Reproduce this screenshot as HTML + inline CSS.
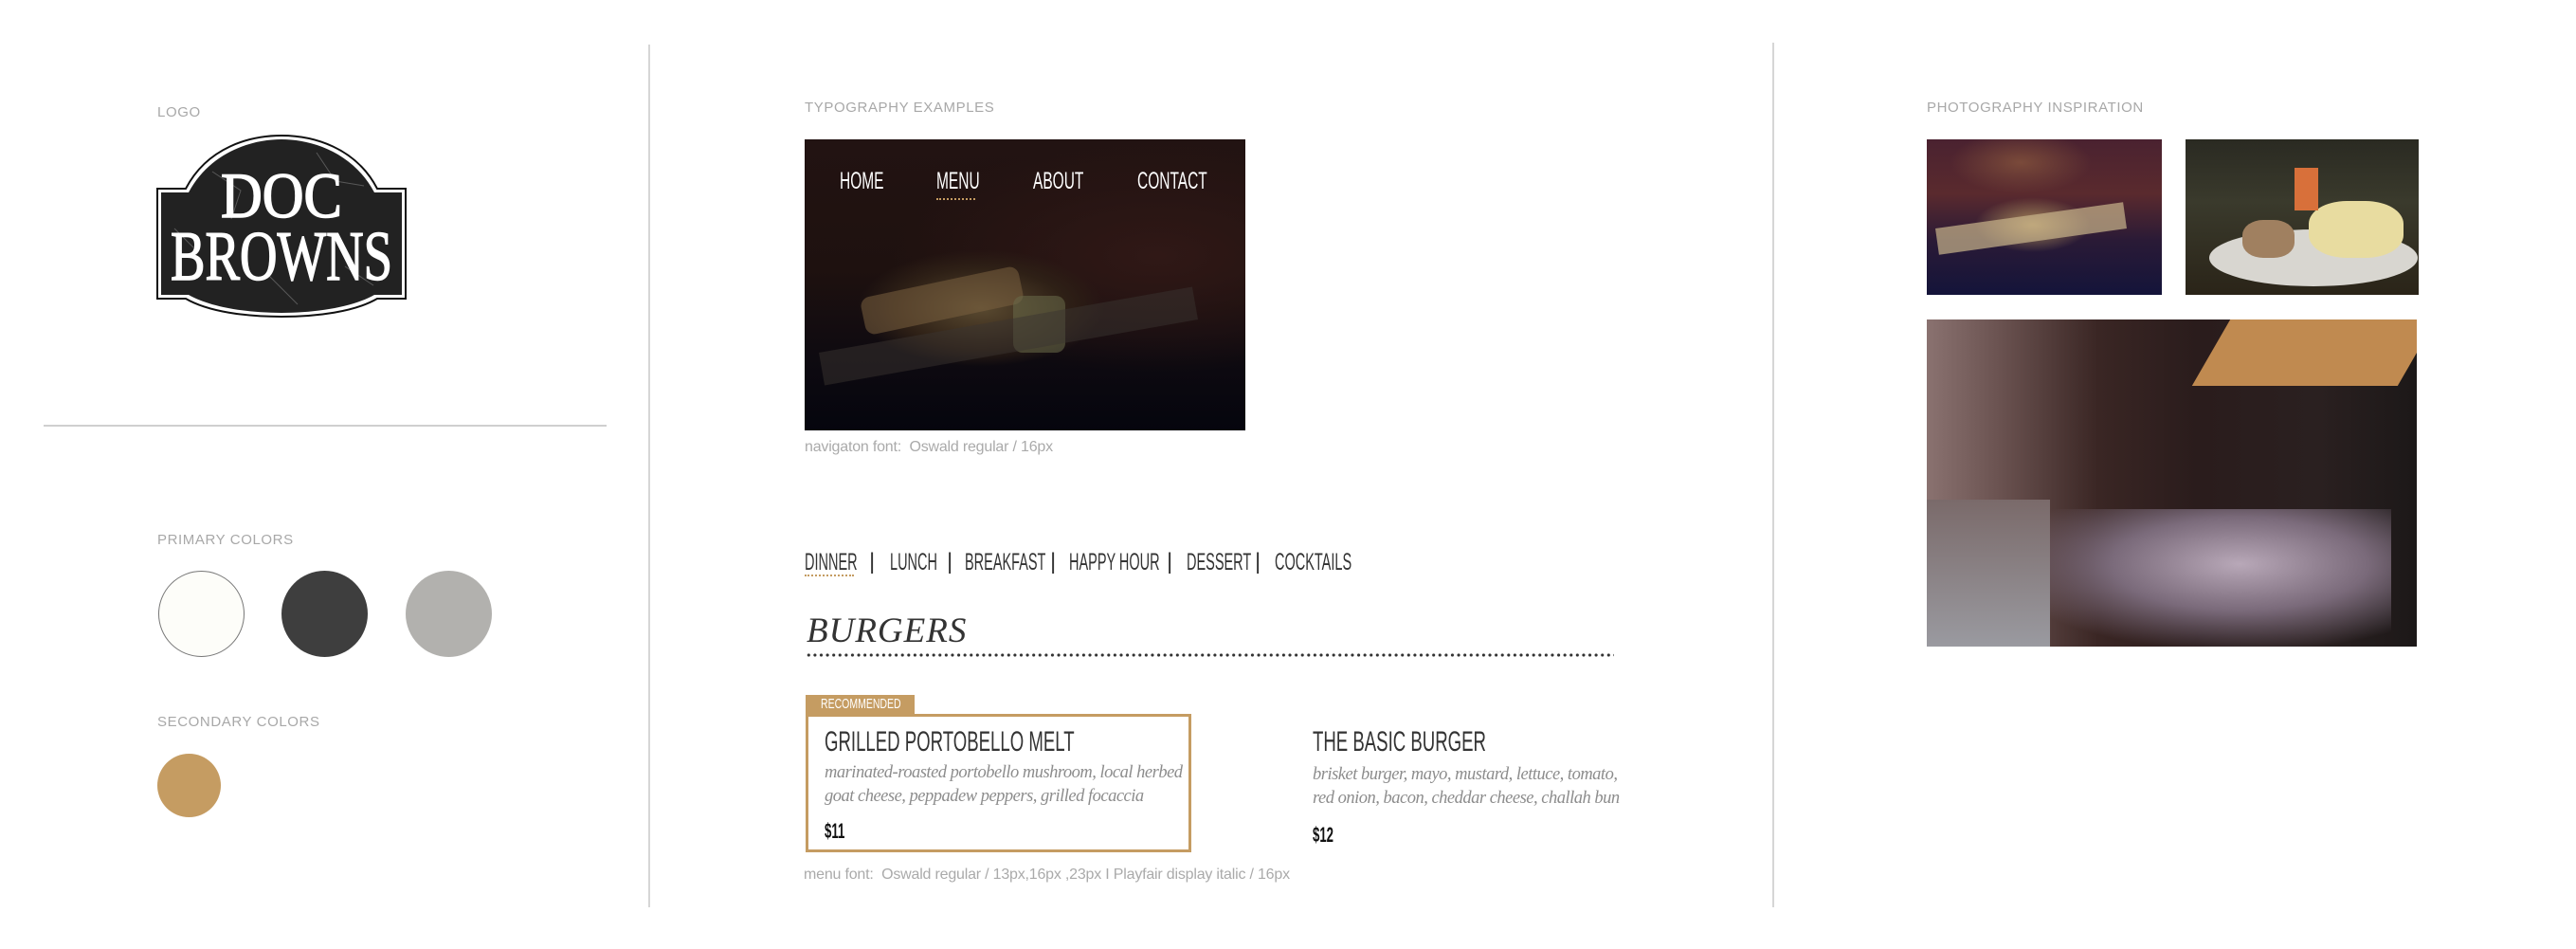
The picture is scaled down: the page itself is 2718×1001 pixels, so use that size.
<!DOCTYPE html>
<html><head><meta charset="utf-8"><style>
*{margin:0;padding:0;box-sizing:border-box}
body{width:2718px;height:1001px;background:#fff;position:relative;overflow:hidden;font-family:"Liberation Sans",sans-serif}
.a{position:absolute;white-space:nowrap}
.lbl{font-size:15px;color:#a8a8a8;letter-spacing:0.6px}
.cap{font-size:16px;color:#aaa;letter-spacing:-0.2px}
.o{display:inline-block;transform-origin:left center;transform:scaleX(.65);font-family:"Liberation Sans",sans-serif}
.vl{position:absolute;width:2px;background:#d6d6d6}
.circ{position:absolute;border-radius:50%}
.pf{font-family:"Liberation Serif",serif;font-style:italic;color:#8c8c8c;font-size:18.5px}
</style></head><body>
<div class="vl" style="left:684px;top:47px;height:910px"></div>
<div class="vl" style="left:1870px;top:45px;height:912px"></div>

<div class="a lbl" style="left:166px;top:110px">LOGO</div>
<svg class="a" style="left:164px;top:141px" width="266" height="195" viewBox="0 0 266 195">
<path d="M2,58 L32,58 C55,14 100,2 133,2 C166,2 211,14 234,58 L264,58 L264,174 L234,174 C210,188 170,193 133,193 C96,193 56,188 32,174 L2,174 Z" fill="#fff" stroke="#111" stroke-width="2"/>
<path d="M6,62 L35,62 C58,19 102,6 133,6 C164,6 208,19 231,62 L260,62 L260,170 L231,170 C208,183 170,189 133,189 C96,189 58,183 35,170 L6,170 Z" fill="#222"/>
<g stroke="#666" stroke-width="1" fill="none" opacity=".8"><path d="M60,40 L90,60 L80,90"/><path d="M170,20 L190,50 L220,55"/><path d="M120,150 L150,180"/><path d="M200,140 L230,160"/><path d="M20,100 L40,120"/></g>
<text x="133" y="88" text-anchor="middle" font-family="Liberation Serif,serif" font-size="68" fill="#fff" stroke="#fff" stroke-width="1.5" textLength="128" lengthAdjust="spacingAndGlyphs">DOC</text>
<text x="133" y="154" text-anchor="middle" font-family="Liberation Serif,serif" font-size="74" fill="#fff" stroke="#fff" stroke-width="1.5" textLength="234" lengthAdjust="spacingAndGlyphs">BROWNS</text>
</svg>
<div class="a" style="left:46px;top:448px;width:594px;height:2px;background:#cfcfcf"></div>

<div class="a lbl" style="left:166px;top:561px">PRIMARY COLORS</div>
<div class="circ" style="left:167px;top:602px;width:91px;height:91px;background:#fdfdf9;border:1.5px solid #777"></div>
<div class="circ" style="left:297px;top:602px;width:91px;height:91px;background:#3e3e3e"></div>
<div class="circ" style="left:428px;top:602px;width:91px;height:91px;background:#b2b1ae"></div>
<div class="a lbl" style="left:166px;top:753px">SECONDARY COLORS</div>
<div class="circ" style="left:166px;top:795px;width:67px;height:67px;background:#c59c62"></div>

<div class="a lbl" style="left:849px;top:105px">TYPOGRAPHY EXAMPLES</div>
<div class="a" style="left:849px;top:147px;width:465px;height:307px;overflow:hidden;background:radial-gradient(ellipse 35% 25% at 40% 58%,#5a4a30 0%,#2e2016 55%,transparent 80%),radial-gradient(ellipse 60% 40% at 80% 40%,#301816,transparent),linear-gradient(180deg,#221312 0%,#1e110f 45%,#0e0a10 75%,#05050e 100%)">
 <div class="a" style="left:60px;top:150px;width:170px;height:40px;background:#7a6040;opacity:.55;border-radius:10px;transform:rotate(-12deg)"></div>
 <div class="a" style="left:220px;top:165px;width:55px;height:60px;background:#6a6b4a;opacity:.55;border-radius:10px"></div>
 <div class="a" style="left:15px;top:190px;width:400px;height:35px;background:#3a3330;opacity:.5;transform:rotate(-10deg)"></div>
 <div class="a" style="left:37px;top:30px;color:#fff;font-size:25px"><span class="o" style="transform:scaleX(.62)">HOME</span></div>
 <div class="a" style="left:139px;top:30px;color:#fff;font-size:25px"><span class="o" style="transform:scaleX(.62)">MENU</span></div>
 <div class="a" style="left:139px;top:62px;width:41px;border-top:2px dotted #c59c62"></div>
 <div class="a" style="left:241px;top:30px;color:#fff;font-size:25px"><span class="o" style="transform:scaleX(.62)">ABOUT</span></div>
 <div class="a" style="left:351px;top:30px;color:#fff;font-size:25px"><span class="o" style="transform:scaleX(.62)">CONTACT</span></div>
</div>
<div class="a cap" style="left:849px;top:463px">navigaton font:&nbsp; Oswald regular / 16px</div>

<div class="a" style="left:849px;top:579px;font-size:25px;color:#333"><span class="o" style="transform:scaleX(.58)">DINNER</span></div>
<div class="a" style="left:849px;top:606px;width:52px;border-top:2px dotted #c59c62"></div>
<div class="a" style="left:917px;top:579px;font-size:24px;color:#333">|</div>
<div class="a" style="left:939px;top:579px;font-size:25px;color:#333"><span class="o" style="transform:scaleX(.58)">LUNCH</span></div>
<div class="a" style="left:999px;top:579px;font-size:24px;color:#333">|</div>
<div class="a" style="left:1018px;top:579px;font-size:25px;color:#333"><span class="o" style="transform:scaleX(.58)">BREAKFAST</span></div>
<div class="a" style="left:1108px;top:579px;font-size:24px;color:#333">|</div>
<div class="a" style="left:1128px;top:579px;font-size:25px;color:#333"><span class="o" style="transform:scaleX(.58)">HAPPY HOUR</span></div>
<div class="a" style="left:1231px;top:579px;font-size:24px;color:#333">|</div>
<div class="a" style="left:1252px;top:579px;font-size:25px;color:#333"><span class="o" style="transform:scaleX(.58)">DESSERT</span></div>
<div class="a" style="left:1324px;top:579px;font-size:24px;color:#333">|</div>
<div class="a" style="left:1345px;top:579px;font-size:25px;color:#333"><span class="o" style="transform:scaleX(.58)">COCKTAILS</span></div>

<div class="a" style="left:851px;top:644px;font-family:'Liberation Serif',serif;font-style:italic;font-size:37px;color:#333;letter-spacing:1px">BURGERS</div>
<div class="a" style="left:850px;top:689px;width:853px;height:4px;background:radial-gradient(circle,#333 1.4px,transparent 1.8px) 0 0/6.6px 4px repeat-x"></div>

<div class="a" style="left:850px;top:733px;width:115px;height:22px;background:#c59c62;color:#fff;font-size:15px;padding:1px 0 0 16px"><span class="o" style="transform:scaleX(.7)">RECOMMENDED</span></div>
<div class="a" style="left:850px;top:753px;width:407px;height:146px;border:3px solid #c59c62"></div>
<div class="a" style="left:870px;top:766px;font-size:30px;color:#333"><span class="o" style="transform:scaleX(.62)">GRILLED PORTOBELLO MELT</span></div>
<div class="a pf" style="left:870px;top:805px;letter-spacing:-0.5px">marinated-roasted portobello mushroom, local herbed</div>
<div class="a pf" style="left:870px;top:830px;letter-spacing:-0.5px">goat cheese, peppadew peppers, grilled focaccia</div>
<div class="a" style="left:870px;top:864px;font-size:22px;color:#111;font-weight:bold"><span class="o" style="transform:scaleX(.6)">$11</span></div>

<div class="a" style="left:1385px;top:766px;font-size:30px;color:#333"><span class="o" style="transform:scaleX(.62)">THE BASIC BURGER</span></div>
<div class="a pf" style="left:1385px;top:807px;letter-spacing:-0.5px">brisket burger, mayo, mustard, lettuce, tomato,</div>
<div class="a pf" style="left:1385px;top:832px;letter-spacing:-0.5px">red onion, bacon, cheddar cheese, challah bun</div>
<div class="a" style="left:1385px;top:868px;font-size:22px;color:#111;font-weight:bold"><span class="o" style="transform:scaleX(.6)">$12</span></div>
<div class="a cap" style="left:848px;top:914px">menu font:&nbsp; Oswald regular / 13px,16px ,23px I Playfair display italic / 16px</div>

<div class="a lbl" style="left:2033px;top:105px">PHOTOGRAPHY INSPIRATION</div>
<div class="a" style="left:2033px;top:147px;width:248px;height:164px;overflow:hidden;background:radial-gradient(ellipse 35% 25% at 45% 55%,#a98a5a,transparent 70%),radial-gradient(ellipse 30% 20% at 40% 15%,#7a4a3a,transparent),linear-gradient(180deg,#4a2230 0%,#5a2a2e 35%,#2a1a36 65%,#14143a 100%)">
 <div class="a" style="left:10px;top:80px;width:200px;height:28px;background:#c9b58c;opacity:.7;transform:rotate(-8deg)"></div>
</div>
<div class="a" style="left:2306px;top:147px;width:246px;height:164px;overflow:hidden;background:linear-gradient(180deg,#2a2a22 0%,#3a3a2c 40%,#2a2418 100%)">
 <div class="a" style="left:25px;top:95px;width:220px;height:60px;background:#d8d6d0;border-radius:50%"></div>
 <div class="a" style="left:130px;top:65px;width:100px;height:60px;background:#e8dca0;border-radius:40%"></div>
 <div class="a" style="left:60px;top:85px;width:55px;height:40px;background:#a08060;border-radius:40%"></div>
 <div class="a" style="left:115px;top:30px;width:25px;height:45px;background:#d8703a"></div>
</div>
<div class="a" style="left:2033px;top:337px;width:517px;height:345px;overflow:hidden;background:linear-gradient(90deg,#8a7270 0%,#6a5250 15%,#3a2624 35%,#2a1c1c 55%,#2a2020 80%,#1c1818 100%)">
 <div class="a" style="left:300px;top:0;width:217px;height:70px;background:#c08a50;transform:skewX(-30deg)"></div>
 <div class="a" style="left:90px;top:200px;width:400px;height:145px;background:radial-gradient(ellipse at 60% 40%,#b8a8b8 0%,#7a6a7a 40%,transparent 75%)"></div>
 <div class="a" style="left:0;top:190px;width:130px;height:155px;background:linear-gradient(180deg,#7a6a6a,#9a9aa0)"></div>
</div>
</body></html>
